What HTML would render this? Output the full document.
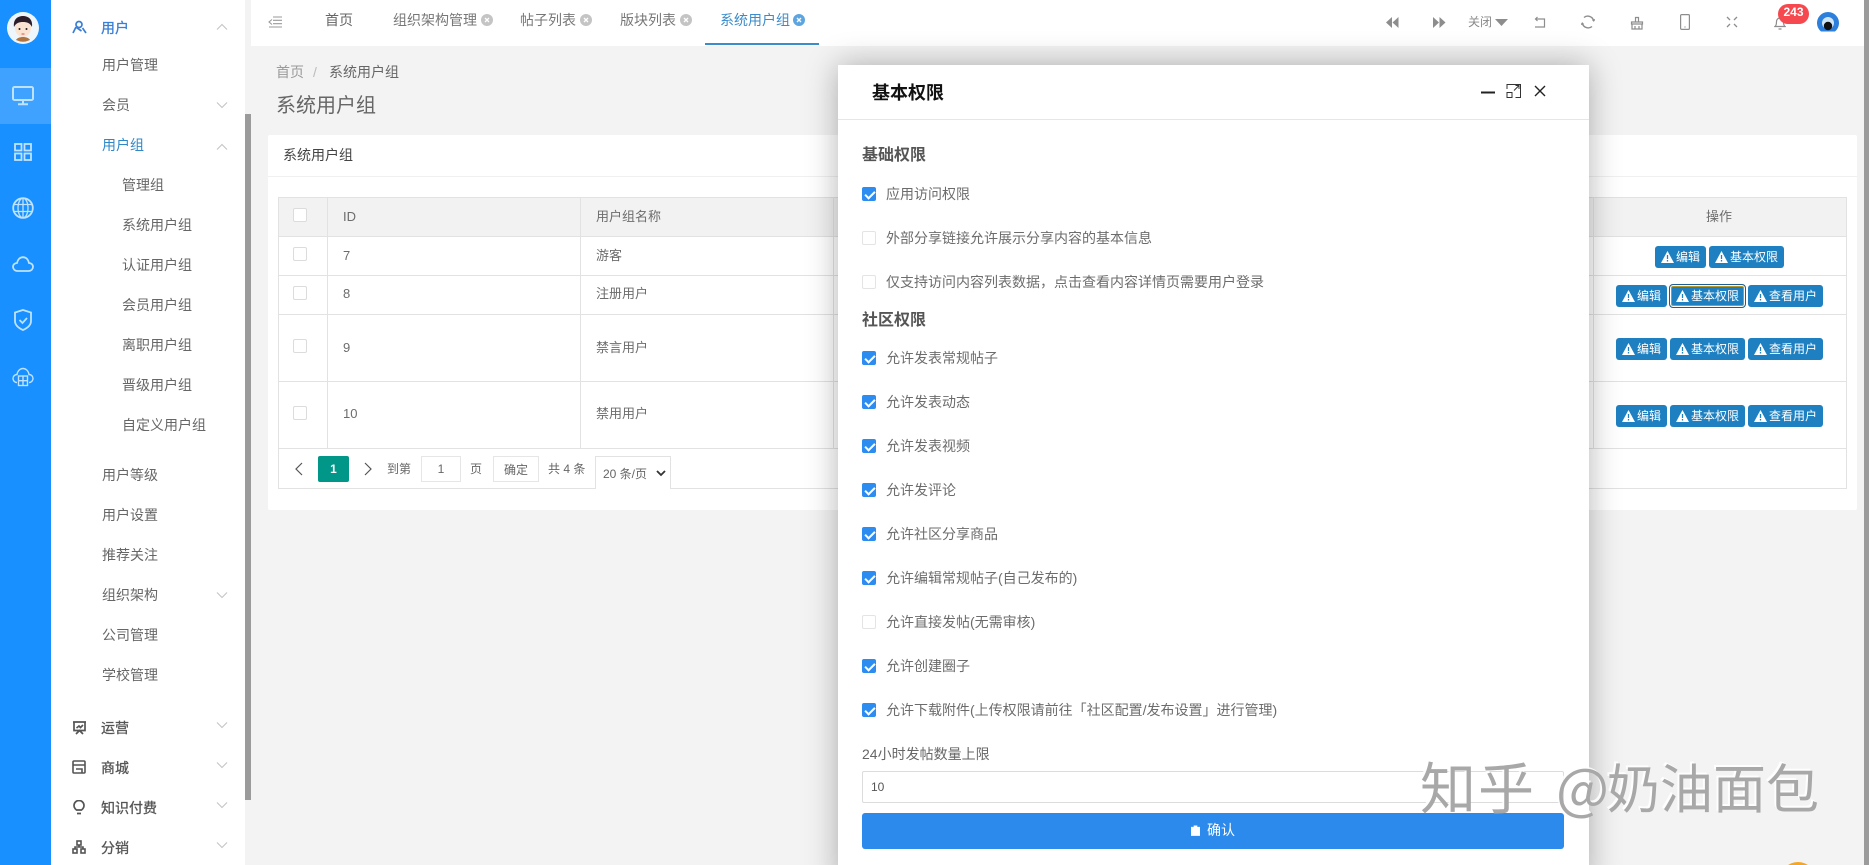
<!DOCTYPE html>
<html lang="zh"><head><meta charset="utf-8"><title>系统用户组</title>
<style>
*{box-sizing:border-box}
html,body{margin:0;padding:0;width:1869px;height:865px;overflow:hidden;background:#f3f3f3}
body{position:relative;font-family:"Liberation Sans","Noto Sans CJK SC",sans-serif;font-size:14px;color:#666}
.a,.t,.m,.s,.l1,.c,.b,.cb,.ck,.ln,svg.i{position:absolute}
.t,.m,.s,.l1,.c{line-height:20px;white-space:nowrap}
.m{left:102px;color:#666}
.s{left:122px;color:#666}
.l1{left:101px;color:#555;-webkit-text-stroke:.3px #555}
.c{font-size:13px;color:#6c6c6c}
.b{height:22px;background:#1e80c1;border-radius:3px;color:#fff;font-size:12px;line-height:22px;padding-left:21px;white-space:nowrap}
.b svg{position:absolute;left:6px;top:5px}
.b.w{width:51px}.b.x{width:75px}
.cb{width:14px;height:14px;border:1px solid #dcdcdc;border-radius:2px;background:#fff}
.ck{left:862px;width:14px;height:14px;border-radius:2px;background:#2d8cf0}
.ck:after{content:"";position:absolute;left:5px;top:2px;width:4px;height:8px;border:solid #fff;border-width:0 2px 2px 0;transform:rotate(45deg)}
.ue{left:862px;background:#fff;border-color:#e4e4e4}
.ue:after{display:none}
.ln{background:#e2e2e2}
.tx{position:absolute;left:886px;line-height:20px;color:#6c6c6c;white-space:nowrap}
.ch{position:absolute;left:216px;width:12px;height:8px}
.ic{fill:none;stroke:#bfe2ff;stroke-width:1.800}
.tb{fill:none;stroke:#8d8d8d;stroke-width:1.2}
.wm{position:absolute;top:748px;font-family:'Noto Sans CJK SC',sans-serif;font-size:56px;line-height:76px;color:#a8a8a8;text-shadow:-2px -2px 0 rgba(255,255,255,.85);white-space:nowrap}
</style></head><body>

<!-- rail -->
<div class="a" style="left:0;top:0;width:51px;height:865px;background:#1890ff"></div>
<div class="a" style="left:0;top:68px;width:51px;height:56px;background:#3fa2ff"></div>
<svg class="i" style="left:7px;top:12px" width="32" height="32" viewBox="0 0 32 32">
<circle cx="16" cy="16" r="16" fill="#eef6fb"/><path d="M9 28c2-4 12-4 14 0a16 16 0 0 1-14 0z" fill="#b0743f"/><ellipse cx="16" cy="16" rx="8" ry="9" fill="#fbe3d2"/><path d="M7 15c-1-8 4-11 9-11s10 3 9 11c-2-4-5-5-9-5s-7 1-9 5z" fill="#2c1f2b"/><circle cx="12.500" cy="17" r="1" fill="#222"/><circle cx="19.500" cy="17" r="1" fill="#222"/><path d="M14.500 22h3" stroke="#d9534f" stroke-width="1"/>
</svg>
<svg class="i ic" style="left:12px;top:86px;stroke-width:2" width="22" height="20" viewBox="0 0 22 20"><rect x="1" y="1" width="20" height="13" rx="1.500"/><path d="M11 14v4M6 18.200h10"/></svg>
<svg class="i ic" style="left:14px;top:143px" width="18" height="18" viewBox="0 0 18 18"><rect x="1" y="1" width="6.500" height="6.500"/><rect x="10.500" y="1" width="6.500" height="6.500"/><rect x="1" y="10.500" width="6.500" height="6.500"/><rect x="10.500" y="10.500" width="6.500" height="6.500"/></svg>
<svg class="i ic" style="left:12px;top:197px;stroke-width:1.300" width="22" height="22" viewBox="0 0 22 22"><circle cx="11" cy="11" r="9.800" stroke-width="1.800"/><ellipse cx="11" cy="11" rx="5" ry="9.800"/><path d="M11 1v20M1.500 7.500h19M1.500 14.500h19"/></svg>
<svg class="i ic" style="left:12px;top:256px" width="22" height="16" viewBox="0 0 22 16"><path d="M5.500 15C2.800 15 1 13 1 10.800 1 8.600 2.800 7 5 7 5.700 3.500 8 1.200 11 1.200c3 0 5.300 2.300 6 5.800 2.200 0 4 1.600 4 3.800S19.200 15 16.500 15z"/></svg>
<svg class="i ic" style="left:14px;top:309px" width="18" height="22" viewBox="0 0 18 22"><path d="M9 1l8 2.500v8.500c0 4-3.500 7-8 9-4.500-2-8-5-8-9V3.500z"/><path d="M5.500 11l3 3 4.500-5"/></svg>
<svg class="i ic" style="left:12px;top:367px;stroke-width:1.400" width="22" height="20" viewBox="0 0 22 20"><path d="M5 15.500C2.500 15.500 1 13.500 1 11.500s1.500-4 4-4C5.500 4 8 1.500 11 1.500s5.500 2.500 6 6c2.500 0 4 2 4 4s-1.500 4-4 4"/><rect x="6.500" y="9" width="9" height="9.500"/><path d="M6.500 13.700h9M11 9v9.500"/></svg>

<!-- menu panel -->
<div class="a" style="left:51px;top:0;width:194px;height:865px;background:#fff"></div>
<div class="a" style="left:245px;top:0;width:6px;height:865px;background:#f3f3f3"></div>
<div class="a" style="left:245px;top:114px;width:6px;height:686px;background:#9b9b9b"></div>

<svg class="i" style="left:72px;top:20px" width="15" height="15" viewBox="0 0 15 15" fill="none" stroke="#3a7fd5" stroke-width="1.700"><circle cx="7" cy="4.500" r="3"/><path d="M1 13l3-6M14 13l-3.500-5M4.500 7.500l5 3.500"/></svg>
<div class="l1" style="top:18px;color:#3a7fd5;-webkit-text-stroke:.3px #3a7fd5">用户</div>
<div class="m" style="top:55px">用户管理</div>
<div class="m" style="top:95px">会员</div>
<div class="m" style="top:135px;color:#2e88c8">用户组</div>
<div class="s" style="top:175px">管理组</div>
<div class="s" style="top:215px">系统用户组</div>
<div class="s" style="top:255px">认证用户组</div>
<div class="s" style="top:295px">会员用户组</div>
<div class="s" style="top:335px">离职用户组</div>
<div class="s" style="top:375px">晋级用户组</div>
<div class="s" style="top:415px">自定义用户组</div>
<div class="m" style="top:465px">用户等级</div>
<div class="m" style="top:505px">用户设置</div>
<div class="m" style="top:545px">推荐关注</div>
<div class="m" style="top:585px">组织架构</div>
<div class="m" style="top:625px">公司管理</div>
<div class="m" style="top:665px">学校管理</div>
<div class="l1" style="top:718px">运营</div>
<div class="l1" style="top:758px">商城</div>
<div class="l1" style="top:798px">知识付费</div>
<div class="l1" style="top:838px">分销</div>

<svg class="i" style="left:72px;top:721px" width="15" height="14" viewBox="0 0 15 14" fill="none" stroke="#555" stroke-width="1.700"><path d="M1 1h13M2 1v8.500h11V1M4 13l3.500-3.500L11 13M4.500 7l2.500-2 1.500 1.500 2.500-2.500"/></svg>
<svg class="i" style="left:72px;top:760px" width="14" height="14" viewBox="0 0 14 14" fill="none" stroke="#555" stroke-width="1.600"><rect x="1" y="1" width="12" height="12" rx="1"/><path d="M1 5h12M4 9h6v4"/></svg>
<svg class="i" style="left:73px;top:800px" width="12" height="15" viewBox="0 0 12 15" fill="none" stroke="#555" stroke-width="1.700"><path d="M3.500 10C2 8.800 1 7.500 1 5.500a5 5 0 0 1 10 0c0 2-1 3.300-2.500 4.500zM4 13.500h4"/></svg>
<svg class="i" style="left:72px;top:840px" width="14" height="14" viewBox="0 0 14 14" fill="none" stroke="#555" stroke-width="1.600"><rect x="5" y="1" width="4" height="4"/><rect x="1" y="9" width="4" height="4"/><rect x="9" y="9" width="4" height="4"/><path d="M7 5v2M3 9V7h8v2"/></svg>

<svg class="ch" style="top:23px" viewBox="0 0 12 8" fill="none" stroke="#c4c4c4" stroke-width="1.100"><path d="M1 6.500l5-5 5 5"/></svg>
<svg class="ch" style="top:101px" viewBox="0 0 12 8" fill="none" stroke="#c4c4c4" stroke-width="1.100"><path d="M1 1.500l5 5 5-5"/></svg>
<svg class="ch" style="top:143px" viewBox="0 0 12 8" fill="none" stroke="#c4c4c4" stroke-width="1.100"><path d="M1 6.500l5-5 5 5"/></svg>
<svg class="ch" style="top:591px" viewBox="0 0 12 8" fill="none" stroke="#c4c4c4" stroke-width="1.100"><path d="M1 1.500l5 5 5-5"/></svg>
<svg class="ch" style="top:721px" viewBox="0 0 12 8" fill="none" stroke="#c4c4c4" stroke-width="1.100"><path d="M1 1.500l5 5 5-5"/></svg>
<svg class="ch" style="top:761px" viewBox="0 0 12 8" fill="none" stroke="#c4c4c4" stroke-width="1.100"><path d="M1 1.500l5 5 5-5"/></svg>
<svg class="ch" style="top:801px" viewBox="0 0 12 8" fill="none" stroke="#c4c4c4" stroke-width="1.100"><path d="M1 1.500l5 5 5-5"/></svg>
<svg class="ch" style="top:841px" viewBox="0 0 12 8" fill="none" stroke="#c4c4c4" stroke-width="1.100"><path d="M1 1.500l5 5 5-5"/></svg>

<!-- topbar -->
<div class="a" style="left:251px;top:0;width:1613px;height:46px;background:#fff"></div>
<div class="a" style="left:1864px;top:0;width:5px;height:865px;background:#9b9b9b"></div>
<svg class="i" style="left:268px;top:16px" width="14" height="12" viewBox="0 0 14 12" fill="none" stroke="#999" stroke-width="1.100"><path d="M5 1h9M5 4.300h9M5 7.700h9M1 11h13M4 3.500L1 6l3 2.500"/></svg>
<div class="t" style="left:325px;top:10px">首页</div>
<div class="t" style="left:393px;top:10px;color:#777">组织架构管理</div>
<div class="t" style="left:520px;top:10px;color:#777">帖子列表</div>
<div class="t" style="left:620px;top:10px;color:#777">版块列表</div>
<div class="t" style="left:720px;top:10px;color:#3b8ccb">系统用户组</div>
<svg class="i" style="left:481px;top:14px" width="12" height="12" viewBox="0 0 12 12"><circle cx="6" cy="6" r="6" fill="#c4c4c4"/><path d="M4 4l4 4M8 4l-4 4" stroke="#fff" stroke-width="1.300"/></svg>
<svg class="i" style="left:580px;top:14px" width="12" height="12" viewBox="0 0 12 12"><circle cx="6" cy="6" r="6" fill="#c4c4c4"/><path d="M4 4l4 4M8 4l-4 4" stroke="#fff" stroke-width="1.300"/></svg>
<svg class="i" style="left:680px;top:14px" width="12" height="12" viewBox="0 0 12 12"><circle cx="6" cy="6" r="6" fill="#c4c4c4"/><path d="M4 4l4 4M8 4l-4 4" stroke="#fff" stroke-width="1.300"/></svg>
<svg class="i" style="left:793px;top:14px" width="12" height="12" viewBox="0 0 12 12"><circle cx="6" cy="6" r="6" fill="#5da5e0"/><path d="M4 4l4 4M8 4l-4 4" stroke="#fff" stroke-width="1.300"/></svg>
<div class="a" style="left:705px;top:43px;width:114px;height:2px;background:#3b8ccb"></div>

<svg class="i" style="left:1386px;top:17px" width="13" height="11" viewBox="0 0 13 11" fill="#8d8d8d"><path d="M6 0v11L0 5.500zM12.500 0v11L6.500 5.500z"/></svg>
<svg class="i" style="left:1433px;top:17px" width="13" height="11" viewBox="0 0 13 11" fill="#8d8d8d"><path d="M0 0v11l6-5.500zM6.500 0v11l6-5.500z"/></svg>
<div class="t" style="left:1468px;top:12px;font-size:12px;color:#8a8a8a">关闭</div>
<svg class="i" style="left:1495px;top:19px" width="13" height="7" viewBox="0 0 13 7" fill="#8d8d8d"><path d="M0 0h13L6.500 7z"/></svg>
<svg class="i tb" style="left:1534px;top:16px" width="12" height="12" viewBox="0 0 12 12"><path d="M2 3h8.500v8H1M3.500 1L1.500 3l2 2"/></svg>
<svg class="i tb" style="left:1581px;top:15px;stroke-width:1.400" width="14" height="14" viewBox="0 0 14 14"><path d="M12.600 5.500A6 6 0 0 0 3 2.500M1.400 8.500A6 6 0 0 0 11 11.500"/><path d="M11.500 4.500l1.200 1.300 1-1.500M2.500 9.500L1.300 8.200l-1 1.500"/></svg>
<svg class="i tb" style="left:1630px;top:16px" width="14" height="14" viewBox="0 0 14 14"><path d="M5.500 6V1.500h3V6M1.500 6h11v2h-11zM2 8v5h10V8M5 13v-3M9 13v-3"/></svg>
<svg class="i tb" style="left:1680px;top:14px" width="10" height="16" viewBox="0 0 10 16"><rect x=".6" y=".6" width="8.800" height="14.800" rx="1"/><path d="M4.500 13h1"/></svg>
<svg class="i tb" style="left:1726px;top:16px;stroke-width:1.300" width="12" height="12" viewBox="0 0 12 12"><path d="M1 1l3 3M11 1L8 4M1 11l3-3M11 11L8 8"/></svg>
<svg class="i tb" style="left:1774px;top:15px" width="12" height="15" viewBox="0 0 12 15"><path d="M1 11.500c1.500-1 1.500-3 1.500-5a3.500 3.500 0 0 1 7 0c0 2 0 4 1.500 5zM4.500 14h3"/></svg>
<div class="a" style="left:1778px;top:4px;width:31px;height:20px;background:#f5484f;border-radius:10px;color:#fff;font-size:12px;font-weight:bold;text-align:center;line-height:16px">243</div>
<svg class="i" style="left:1817px;top:11px" width="22" height="21" viewBox="0 0 22 21"><path d="M4 20.500A11 11 0 1 1 18 20.500z" fill="#2d7fdc"/><circle cx="11" cy="12" r="6" fill="#cfe6f7"/><circle cx="11" cy="15" r="4.200" fill="#111"/></svg>

<!-- breadcrumbs -->
<div class="t" style="left:276px;top:62px;color:#9a9a9a">首页</div>
<div class="t" style="left:313px;top:62px;color:#bbb">/</div>
<div class="t" style="left:329px;top:62px;color:#666">系统用户组</div>
<div class="t" style="left:276px;top:93px;font-size:20px;line-height:26px;color:#666">系统用户组</div>

<!-- card -->
<div class="a" style="left:268px;top:135px;width:1589px;height:375px;background:#fff;border-radius:2px"></div>
<div class="ln" style="left:268px;top:176px;width:1589px;height:1px;background:#f0f0f0"></div>
<div class="t" style="left:283px;top:145px;color:#444">系统用户组</div>

<!-- table -->
<div class="a" style="left:278px;top:197px;width:1569px;height:292px;border:1px solid #e2e2e2"></div>
<div class="a" style="left:279px;top:198px;width:1567px;height:38px;background:#f2f2f2"></div>
<div class="ln" style="left:278px;top:236px;width:1569px;height:1px"></div>
<div class="ln" style="left:278px;top:275px;width:1569px;height:1px"></div>
<div class="ln" style="left:278px;top:314px;width:1569px;height:1px"></div>
<div class="ln" style="left:278px;top:381px;width:1569px;height:1px"></div>
<div class="ln" style="left:278px;top:448px;width:1569px;height:1px"></div>
<div class="ln" style="left:327px;top:197px;width:1px;height:251px"></div>
<div class="ln" style="left:580px;top:197px;width:1px;height:251px"></div>
<div class="ln" style="left:833px;top:197px;width:1px;height:251px"></div>
<div class="ln" style="left:1593px;top:197px;width:1px;height:251px"></div>

<div class="cb" style="left:293px;top:208px"></div>
<div class="cb" style="left:293px;top:247px"></div>
<div class="cb" style="left:293px;top:286px"></div>
<div class="cb" style="left:293px;top:339px"></div>
<div class="cb" style="left:293px;top:406px"></div>
<div class="c" style="left:343px;top:207px">ID</div>
<div class="c" style="left:343px;top:246px">7</div>
<div class="c" style="left:343px;top:284px">8</div>
<div class="c" style="left:343px;top:338px">9</div>
<div class="c" style="left:343px;top:404px">10</div>
<div class="c" style="left:596px;top:207px">用户组名称</div>
<div class="c" style="left:596px;top:246px">游客</div>
<div class="c" style="left:596px;top:284px">注册用户</div>
<div class="c" style="left:596px;top:338px">禁言用户</div>
<div class="c" style="left:596px;top:404px">禁用用户</div>
<div class="c" style="left:1706px;top:207px">操作</div>

<div class="b w" style="left:1655px;top:246px"><svg width="13" height="12" viewBox="0 0 13 12"><path d="M6.500 0L13 12H0z" fill="#fff"/><path d="M6.500 4v4M6.500 9v1.500" stroke="#1e80c1" stroke-width="1.300"/></svg>编辑</div>
<div class="b x" style="left:1709px;top:246px"><svg width="13" height="12" viewBox="0 0 13 12"><path d="M6.500 0L13 12H0z" fill="#fff"/><path d="M6.500 4v4M6.500 9v1.500" stroke="#1e80c1" stroke-width="1.300"/></svg>基本权限</div>
<div class="b w" style="left:1616px;top:285px"><svg width="13" height="12" viewBox="0 0 13 12"><path d="M6.500 0L13 12H0z" fill="#fff"/><path d="M6.500 4v4M6.500 9v1.500" stroke="#1e80c1" stroke-width="1.300"/></svg>编辑</div>
<div class="b x" style="left:1670px;top:285px;box-shadow:inset 0 0 0 1px #fff,inset 0 0 0 2px #b8962a;outline:1px solid #1d5f8f"><svg width="13" height="12" viewBox="0 0 13 12"><path d="M6.500 0L13 12H0z" fill="#fff"/><path d="M6.500 4v4M6.500 9v1.500" stroke="#1e80c1" stroke-width="1.300"/></svg>基本权限</div>
<div class="b x" style="left:1748px;top:285px"><svg width="13" height="12" viewBox="0 0 13 12"><path d="M6.500 0L13 12H0z" fill="#fff"/><path d="M6.500 4v4M6.500 9v1.500" stroke="#1e80c1" stroke-width="1.300"/></svg>查看用户</div>
<div class="b w" style="left:1616px;top:338px"><svg width="13" height="12" viewBox="0 0 13 12"><path d="M6.500 0L13 12H0z" fill="#fff"/><path d="M6.500 4v4M6.500 9v1.500" stroke="#1e80c1" stroke-width="1.300"/></svg>编辑</div>
<div class="b x" style="left:1670px;top:338px"><svg width="13" height="12" viewBox="0 0 13 12"><path d="M6.500 0L13 12H0z" fill="#fff"/><path d="M6.500 4v4M6.500 9v1.500" stroke="#1e80c1" stroke-width="1.300"/></svg>基本权限</div>
<div class="b x" style="left:1748px;top:338px"><svg width="13" height="12" viewBox="0 0 13 12"><path d="M6.500 0L13 12H0z" fill="#fff"/><path d="M6.500 4v4M6.500 9v1.500" stroke="#1e80c1" stroke-width="1.300"/></svg>查看用户</div>
<div class="b w" style="left:1616px;top:405px"><svg width="13" height="12" viewBox="0 0 13 12"><path d="M6.500 0L13 12H0z" fill="#fff"/><path d="M6.500 4v4M6.500 9v1.500" stroke="#1e80c1" stroke-width="1.300"/></svg>编辑</div>
<div class="b x" style="left:1670px;top:405px"><svg width="13" height="12" viewBox="0 0 13 12"><path d="M6.500 0L13 12H0z" fill="#fff"/><path d="M6.500 4v4M6.500 9v1.500" stroke="#1e80c1" stroke-width="1.300"/></svg>基本权限</div>
<div class="b x" style="left:1748px;top:405px"><svg width="13" height="12" viewBox="0 0 13 12"><path d="M6.500 0L13 12H0z" fill="#fff"/><path d="M6.500 4v4M6.500 9v1.500" stroke="#1e80c1" stroke-width="1.300"/></svg>查看用户</div>

<!-- pager -->
<svg class="i" style="left:294px;top:462px" width="9" height="14" viewBox="0 0 9 14" fill="none" stroke="#555" stroke-width="1.200"><path d="M8 1L2 7l6 6"/></svg>
<div class="a" style="left:318px;top:456px;width:31px;height:26px;background:#009688;border-radius:2px;color:#fff;font-size:12px;font-weight:bold;text-align:center;line-height:26px">1</div>
<svg class="i" style="left:364px;top:462px" width="9" height="14" viewBox="0 0 9 14" fill="none" stroke="#555" stroke-width="1.200"><path d="M1 1l6 6-6 6"/></svg>
<div class="t" style="left:387px;top:459px;font-size:12px">到第</div>
<div class="a" style="left:421px;top:456px;width:40px;height:26px;border:1px solid #e6e6e6;text-align:center;line-height:24px;font-size:12px;background:#fff">1</div>
<div class="t" style="left:470px;top:459px;font-size:12px">页</div>
<div class="a" style="left:493px;top:456px;width:46px;height:26px;border:1px solid #e6e6e6;text-align:center;line-height:26px;font-size:12px;background:#fff">确定</div>
<div class="t" style="left:548px;top:459px;font-size:12px">共 4 条</div>
<div class="a" style="left:595px;top:456px;width:76px;height:33px;border:1px solid #e2e2e2;border-bottom:0;background:#fff;font-size:12px;line-height:34px;padding-left:7px">20 条/页</div>
<svg class="i" style="left:656px;top:470px" width="10" height="7" viewBox="0 0 10 7" fill="none" stroke="#333" stroke-width="1.800"><path d="M1 1l4 4 4-4"/></svg>

<!-- dialog -->
<div class="a" style="left:838px;top:65px;width:751px;height:820px;background:#fff;box-shadow:0 0 30px rgba(0,0,0,.3)"></div>
<div class="ln" style="left:838px;top:119px;width:751px;height:1px;background:#e6e6e6"></div>
<div class="t" style="left:872px;top:81px;font-size:18px;line-height:24px;font-weight:bold;color:#111">基本权限</div>
<svg class="i" style="left:1480px;top:84px" width="16" height="16" viewBox="0 0 16 16"><path d="M1 8.500h14" stroke="#222" stroke-width="2"/></svg>
<svg class="i" style="left:1506px;top:83px" width="16" height="16" viewBox="0 0 16 16" fill="none" stroke="#333" stroke-width="1"><path d="M1 6V1.500h13.500v13H9.500M8 7.500L13 2.500M9.500 2.500H13V6"/><rect x="1" y="9.500" width="5" height="5"/></svg>
<svg class="i" style="left:1533px;top:84px" width="14" height="14" viewBox="0 0 14 14" fill="none" stroke="#222" stroke-width="1.400"><path d="M2 2l10 10M12 2L2 12"/></svg>

<div class="t" style="left:862px;top:146px;font-size:16px;font-weight:bold;color:#555">基础权限</div>
<div class="ck" style="top:187px"></div><div class="tx" style="top:184px">应用访问权限</div>
<div class="ck ue" style="top:231px;border:1px solid #e4e4e4"></div><div class="tx" style="top:228px">外部分享链接允许展示分享内容的基本信息</div>
<div class="ck ue" style="top:275px;border:1px solid #e4e4e4"></div><div class="tx" style="top:272px">仅支持访问内容列表数据，点击查看内容详情页需要用户登录</div>
<div class="t" style="left:862px;top:311px;font-size:16px;font-weight:bold;color:#555">社区权限</div>
<div class="ck" style="top:351px"></div><div class="tx" style="top:348px">允许发表常规帖子</div>
<div class="ck" style="top:395px"></div><div class="tx" style="top:392px">允许发表动态</div>
<div class="ck" style="top:439px"></div><div class="tx" style="top:436px">允许发表视频</div>
<div class="ck" style="top:483px"></div><div class="tx" style="top:480px">允许发评论</div>
<div class="ck" style="top:527px"></div><div class="tx" style="top:524px">允许社区分享商品</div>
<div class="ck" style="top:571px"></div><div class="tx" style="top:568px">允许编辑常规帖子(自己发布的)</div>
<div class="ck ue" style="top:615px;border:1px solid #e4e4e4"></div><div class="tx" style="top:612px">允许直接发帖(无需审核)</div>
<div class="ck" style="top:659px"></div><div class="tx" style="top:656px">允许创建圈子</div>
<div class="ck" style="top:703px"></div><div class="tx" style="top:700px">允许下载附件(上传权限请前往「社区配置/发布设置」进行管理)</div>
<div class="t" style="left:862px;top:744px;color:#666">24小时发帖数量上限</div>
<div class="a" style="left:862px;top:771px;width:702px;height:32px;border:1px solid #dcdcdc;border-radius:2px;line-height:30px;padding-left:8px;font-size:12px;color:#555;background:#fff">10</div>
<div class="a" style="left:862px;top:813px;width:702px;height:36px;background:#2d8aed;border-radius:3px"></div>
<svg class="i" style="left:1191px;top:824px" width="9" height="12" viewBox="0 0 10 13" fill="#fff"><path d="M0 3h3V1.500h4V3h3v10H0z"/></svg>
<div class="t" style="left:1207px;top:820px;color:#fff">确认</div>

<!-- watermark -->
<div class="wm" style="left:1420px;letter-spacing:2px">知乎</div>
<div class="wm" style="left:1556px">@</div>
<div class="wm" style="left:1607px;font-size:53px">奶油面包</div>
<div class="a" style="left:1780px;top:862px;width:36px;height:36px;border-radius:50%;background:#f5a623"></div>
</body></html>
